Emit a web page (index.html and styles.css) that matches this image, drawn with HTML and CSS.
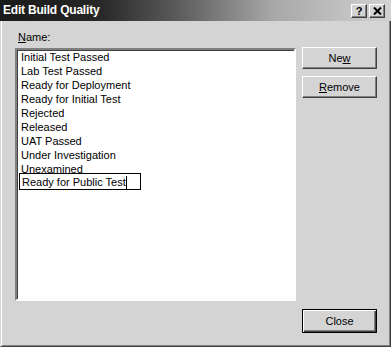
FILE: index.html
```html
<!DOCTYPE html>
<html>
<head>
    <title>Edit Build Quality</title>
    <meta charset="UTF-8" />
    <link rel="stylesheet" href="styles.css">
</head>
<body>
    <div class="window">
        <div class="titlebar">
            <span class="title">Edit Build Quality</span>
            <div class="caption-btns">
                <span class="cap-btn">?</span>
                <span class="cap-btn">
                    <svg width="9" height="8" viewBox="0 0 9 8">
                        <path d="M1 0.5 L8 7.5 M8 0.5 L1 7.5" stroke="#000" stroke-width="2" fill="none" />
                    </svg>
                </span>
            </div>
        </div>

        <div class="content">
            <div class="main">
                <div class="list-col">
                    <div class="label"><u>N</u>ame:</div>
                    <div class="listbox">
                        <div class="item">Initial Test Passed</div>
                        <div class="item">Lab Test Passed</div>
                        <div class="item">Ready for Deployment</div>
                        <div class="item">Ready for Initial Test</div>
                        <div class="item">Rejected</div>
                        <div class="item">Released</div>
                        <div class="item">UAT Passed</div>
                        <div class="item">Under Investigation</div>
                        <div class="item">Unexamined</div>
                        <div class="edit">Ready for Public Test<span class="caret"></span></div>
                    </div>
                </div>
                <div class="btn-col">
                    <button class="btn">Ne<u>w</u></button>
                    <button class="btn"><u>R</u>emove</button>
                </div>
            </div>
            <div class="footer">
                <button class="btn default">Close</button>
            </div>
        </div>
    </div>
</body>
</html>
```

FILE: styles.css
```css
body {
    margin: 0;
    background: #d4d4d4;
    font-family: "Liberation Sans", Arial, sans-serif;
    font-size: 11px;
    color: #000;
}

.window {
    width: 391px;
    height: 347px;
    box-sizing: border-box;
    background: #d4d4d4;
    border-left: 1px solid #d4d4d4;
    border-right: 1px solid #404040;
    border-bottom: 1px solid #404040;
    box-shadow: inset 1px 0 #fff, inset -1px -1px #808080;
    display: flex;
    flex-direction: column;
}

.titlebar {
    height: 21px;
    margin-left: -1px;
    margin-right: -1px;
    display: flex;
    align-items: center;
    justify-content: space-between;
    padding: 0 6px 0 3px;
    background: linear-gradient(to right, #1a1a1a 0%, #262626 25%, #5a5a5a 45%, #a8a8a8 70%, #d2d2d2 100%);
}

.title {
    color: #fff;
    font-weight: bold;
    font-size: 12px;
    letter-spacing: -0.2px;
    line-height: 21px;
}

.caption-btns {
    display: flex;
    gap: 2px;
}

.cap-btn {
    width: 16px;
    height: 14px;
    box-sizing: border-box;
    background: #d4d4d4;
    border: 1px solid;
    border-color: #fff #404040 #404040 #fff;
    box-shadow: inset -1px -1px #808080;
    display: flex;
    align-items: center;
    justify-content: center;
    font-weight: bold;
    font-size: 11px;
    line-height: 12px;
}

.content {
    flex: 1;
    padding: 9px 13px 0 14px;
}

.main {
    display: flex;
}

.label {
    line-height: 14px;
    margin-bottom: 4px;
    padding-left: 3px;
}

.listbox {
    width: 281px;
    height: 253px;
    box-sizing: border-box;
    background: #fff;
    border: 2px solid;
    border-color: #808080 #fff #fff #808080;
    box-shadow: inset 1px 1px #404040;
}

.item {
    line-height: 14px;
    padding-left: 4px;
    white-space: nowrap;
}

.edit {
    width: 122px;
    height: 17px;
    box-sizing: border-box;
    margin: -3px 0 0 2px;
    padding: 1px 0 0 2px;
    border: 1px solid #000;
    line-height: 14px;
    white-space: nowrap;
}

.caret {
    display: inline-block;
    width: 1px;
    height: 13px;
    background: #000;
    vertical-align: -3px;
}

.btn-col {
    display: flex;
    flex-direction: column;
    gap: 7px;
    margin: 17px 0 0 6px;
}

.btn {
    width: 75px;
    height: 22px;
    box-sizing: border-box;
    background: #d4d4d4;
    border: 1px solid;
    border-color: #fff #404040 #404040 #fff;
    box-shadow: inset -1px -1px #808080;
    font-family: "Liberation Sans", Arial, sans-serif;
    font-size: 11px;
    color: #000;
    padding: 0;
}

.footer {
    display: flex;
    justify-content: flex-end;
    margin-top: 8px;
}

.default {
    height: 24px;
    border: 1px solid #000;
    box-shadow: inset 1px 1px #fff, inset -1px -1px #404040, inset -2px -2px #808080;
}
```
